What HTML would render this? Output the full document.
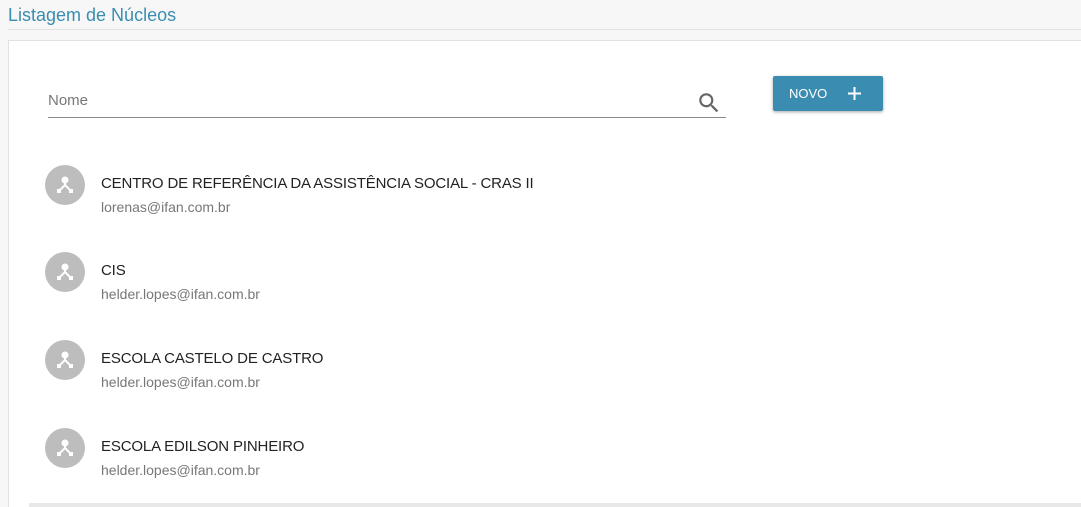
<!DOCTYPE html>
<html><head><style>
html,body{margin:0;width:1081px;height:507px;overflow:hidden}
body{background:#f7f7f7;font-family:"Liberation Sans",sans-serif;position:relative}
.h{position:absolute;left:8px;top:5px;font-size:18px;color:#3a8db0}
.hl{position:absolute;left:8px;right:0;top:29px;height:1px;background:#e2e2e2}
.card{position:absolute;left:8px;top:40px;width:1080px;height:467px;background:#fff;border:1px solid #e2e2e2;border-bottom:none;box-sizing:border-box}
.inp{position:absolute;left:48px;top:92px;width:678px;height:25px;border-bottom:1px solid #8a8a8a;font-size:15px;color:#777}
.btn{position:absolute;left:773px;top:76px;width:110px;height:35px;background:#3a8db0;border-radius:2px;box-shadow:0 1px 3px rgba(0,0,0,.35);color:#fff;font-size:13px}
.row{position:absolute;left:45px}
.av{position:absolute;left:0;top:0;width:40px;height:40px;border-radius:50%;background:#bdbdbd}
.t{position:absolute;left:56px;top:10px;font-size:15px;letter-spacing:-0.15px;color:#222;white-space:nowrap}
.e{position:absolute;left:56px;top:34px;font-size:14px;color:#777;white-space:nowrap}
.bar{position:absolute;left:29px;right:0;top:503px;height:4px;background:#e8e8e8}
</style></head><body>
<div class="h">Listagem de Núcleos</div><div class="hl"></div>
<div class="card"></div>
<div class="inp">Nome
<svg style="position:absolute;right:4px;top:-2px" width="26" height="26" viewBox="0 0 24 24"><path fill="#666" d="M15.5 14h-.79l-.28-.27A6.47 6.47 0 0016 9.5 6.5 6.5 0 109.5 16c1.61 0 3.09-.59 4.23-1.57l.27.28v.79l5 4.99L20.49 19l-4.99-5zm-6 0C7.01 14 5 11.99 5 9.5S7.01 5 9.5 5 14 7.01 14 9.5 11.99 14 9.5 14z"/></svg></div>
<div class="btn"><span style="position:absolute;left:16px;top:10px">NOVO</span><svg style="position:absolute;left:74px;top:10px" width="15" height="15"><path d="M7.5 1v13M1 7.5h13" stroke="#fff" stroke-width="2"/></svg></div>
<div class="row" style="top:165px"><div class="av"><svg width="40" height="40" viewBox="0 0 40 40"><g fill="#fff" stroke="#fff" stroke-width="2"><circle cx="20" cy="15" r="2.5"/><path d="M20 16v4l-5 5M20 20l5 5" fill="none"/><rect x="12" y="24" width="4" height="4" stroke="none"/><rect x="24" y="24" width="4" height="4" stroke="none"/></g></svg></div><div class="t">CENTRO DE REFERÊNCIA DA ASSISTÊNCIA SOCIAL - CRAS II</div><div class="e">lorenas@ifan.com.br</div></div>
<div class="row" style="top:252px"><div class="av"><svg width="40" height="40" viewBox="0 0 40 40"><g fill="#fff" stroke="#fff" stroke-width="2"><circle cx="20" cy="15" r="2.5"/><path d="M20 16v4l-5 5M20 20l5 5" fill="none"/><rect x="12" y="24" width="4" height="4" stroke="none"/><rect x="24" y="24" width="4" height="4" stroke="none"/></g></svg></div><div class="t">CIS</div><div class="e">helder.lopes@ifan.com.br</div></div>
<div class="row" style="top:340px"><div class="av"><svg width="40" height="40" viewBox="0 0 40 40"><g fill="#fff" stroke="#fff" stroke-width="2"><circle cx="20" cy="15" r="2.5"/><path d="M20 16v4l-5 5M20 20l5 5" fill="none"/><rect x="12" y="24" width="4" height="4" stroke="none"/><rect x="24" y="24" width="4" height="4" stroke="none"/></g></svg></div><div class="t">ESCOLA CASTELO DE CASTRO</div><div class="e">helder.lopes@ifan.com.br</div></div>
<div class="row" style="top:428px"><div class="av"><svg width="40" height="40" viewBox="0 0 40 40"><g fill="#fff" stroke="#fff" stroke-width="2"><circle cx="20" cy="15" r="2.5"/><path d="M20 16v4l-5 5M20 20l5 5" fill="none"/><rect x="12" y="24" width="4" height="4" stroke="none"/><rect x="24" y="24" width="4" height="4" stroke="none"/></g></svg></div><div class="t">ESCOLA EDILSON PINHEIRO</div><div class="e">helder.lopes@ifan.com.br</div></div>
<div class="bar"></div>
</body></html>
